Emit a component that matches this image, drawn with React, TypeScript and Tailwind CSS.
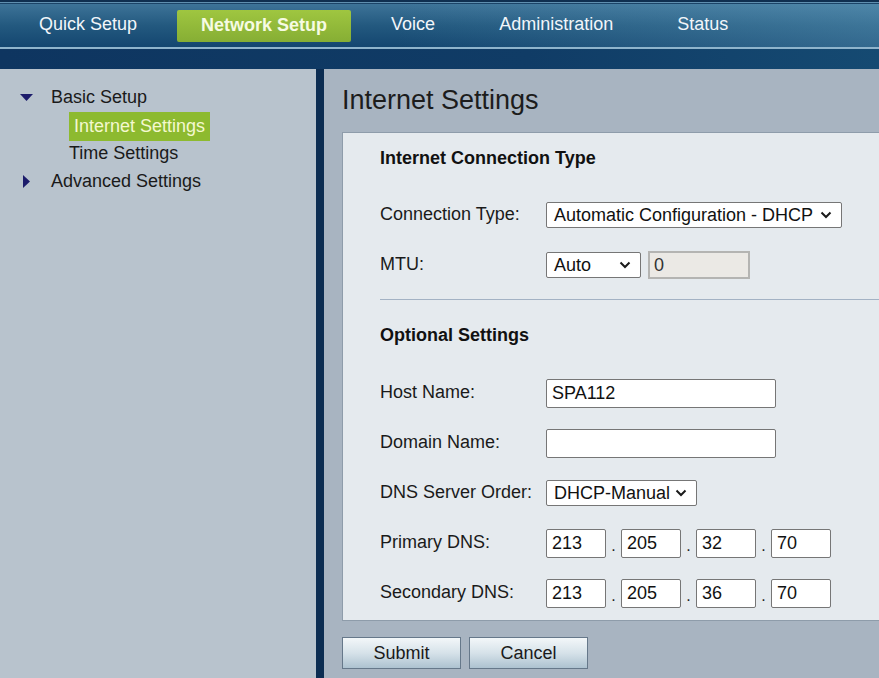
import * as React from "react";

const NAV = ["Quick Setup", "Network Setup", "Voice", "Administration", "Status"];

function Chevron() {
  return (
    <svg width="12" height="8" viewBox="0 0 12 8" className="pointer-events-none absolute right-[9px] top-1/2 -translate-y-1/2">
      <path d="M1.5 1.5 L6 6 L10.5 1.5" fill="none" stroke="#1a1a1a" strokeWidth="2" />
    </svg>
  );
}

function FakeSelect({ value, width }: { value: string; width: string }) {
  return (
    <div className={`relative flex h-[26px] items-center rounded-[2px] border border-[#767676] bg-white pl-[7px] text-[18px] leading-none text-[#111] ${width}`}>
      {value}
      <Chevron />
    </div>
  );
}

function TextBox({ value, width }: { value?: string; width: string }) {
  return (
    <div className={`flex h-[29px] items-center rounded-[2px] border border-[#767676] bg-white pl-[5px] text-[18px] leading-none text-[#111] ${width}`}>
      {value}
    </div>
  );
}

function Row({ label, children }: { label: string; children: React.ReactNode }) {
  return (
    <div className="flex h-[50px] items-center">
      <div className="w-[166px] shrink-0 -translate-y-px text-[18px] text-[#1a1a1a]">{label}</div>
      {children}
    </div>
  );
}

function IpRow({ label, parts }: { label: string; parts: string[] }) {
  return (
    <Row label={label}>
      <div className="flex items-center">
        {parts.map((p, i) => (
          <React.Fragment key={i}>
            {i > 0 ? <span className="w-[15px] pt-[6px] text-center text-[16px] text-[#222]">.</span> : null}
            <TextBox value={p} width="w-[60px]" />
          </React.Fragment>
        ))}
      </div>
    </Row>
  );
}

export default function App() {
  return (
    <div className="h-[678px] w-full overflow-hidden font-['Liberation_Sans',Arial,sans-serif]">
      {/* top bar */}
      <div className="h-[2px] bg-[#0f2f50]" />
      <div className="h-px bg-[#5f8fb0]" />
      <div className="h-px bg-[#1b4468]" />
      <div className="flex h-[43px] items-center gap-4 bg-[linear-gradient(90deg,rgba(110,170,200,0)_45%,rgba(110,170,200,0.35)_100%),linear-gradient(180deg,#3d7398_0%,#23597f_50%,#144670_100%)] pl-[15px]">
        {NAV.map((item) =>
          item === "Network Setup" ? (
            <div
              key={item}
              className="flex h-[32px] items-center rounded-[2px] bg-[linear-gradient(180deg,#9fc640,#86ae34)] px-6 text-[18px] font-bold text-[#f6fbe2]"
            >
              {item}
            </div>
          ) : (
            <div key={item} className="-translate-y-px px-6 text-[18px] text-[#f2f6fa]">
              {item}
            </div>
          )
        )}
      </div>
      <div className="h-[2px] bg-[#8fb4cc]" />
      <div className="h-[20px] bg-[linear-gradient(90deg,#0e3560,#103c66_60%,#154a72)]" />

      <div className="flex h-[609px]">
        {/* sidebar */}
        <div className="w-[316px] shrink-0 bg-[#b8c3cd] pt-[14px] text-[18px] text-[#1a1a1a]">
          <div className="flex h-7 items-center">
            <svg width="13" height="7" viewBox="0 0 13 7" className="ml-[20px] mr-[18px]">
              <path d="M0 0 H13 L6.5 7 Z" fill="#1c1c6b" />
            </svg>
            <span>Basic Setup</span>
          </div>
          <div className="flex h-7 items-center pl-[69px]">
            <span className="flex h-[29px] translate-y-px items-center bg-[#8dba2f] px-[5px] text-[#f4f8cf]">Internet Settings</span>
          </div>
          <div className="flex h-7 items-center pl-[69px]">Time Settings</div>
          <div className="flex h-7 items-center">
            <svg width="7" height="13" viewBox="0 0 7 13" className="ml-[23px] mr-[21px]">
              <path d="M0 0 L7 6.5 L0 13 Z" fill="#1c1c6b" />
            </svg>
            <span>Advanced Settings</span>
          </div>
        </div>
        <div className="w-[8px] shrink-0 bg-[#0c2d52]" />

        {/* content */}
        <div className="min-w-0 flex-1 bg-[#a8b4c1] pl-[18px] pt-[15px]">
          <h1 className="h-[32px] text-[27px] leading-[32px] text-[#1c1c1c]">Internet Settings</h1>
          <div className="mt-[16px] w-[600px] border border-[#8e9caa] bg-[#e5eaee] pb-[2px] pl-[37px]">
            <div className="flex h-[50px] items-center text-[18px] font-bold text-[#111]">Internet Connection Type</div>
            <div className="mt-[7px]">
              <Row label="Connection Type:">
                <FakeSelect value="Automatic Configuration - DHCP" width="w-[296px]" />
              </Row>
              <Row label="MTU:">
                <FakeSelect value="Auto" width="w-[95px]" />
                <div className="ml-[7px] flex h-[28px] w-[102px] items-center border-2 border-[#b4b4b2] bg-[#ebe9e5] pl-[4px] text-[18px] text-[#333]">
                  0
                </div>
              </Row>
            </div>
            <div className="mt-[9px] h-px bg-[#a3b2c4]" />
            <div className="mt-[10px] flex h-[50px] items-center text-[18px] font-bold text-[#111]">Optional Settings</div>
            <div className="mt-[8px]">
              <Row label="Host Name:">
                <TextBox value="SPA112" width="w-[230px]" />
              </Row>
              <Row label="Domain Name:">
                <TextBox width="w-[230px]" />
              </Row>
              <Row label="DNS Server Order:">
                <FakeSelect value="DHCP-Manual" width="w-[151px]" />
              </Row>
              <IpRow label="Primary DNS:" parts={["213", "205", "32", "70"]} />
              <IpRow label="Secondary DNS:" parts={["213", "205", "36", "70"]} />
            </div>
          </div>
          <div className="mt-[16px] flex gap-2">
            {["Submit", "Cancel"].map((b) => (
              <div
                key={b}
                className="flex h-[32px] w-[119px] items-center justify-center border border-[#66788a] bg-[linear-gradient(180deg,#f3f7f9_0%,#d6e2e9_50%,#adc2d0_100%)] text-[18px] text-[#1a1a1a]"
              >
                {b}
              </div>
            ))}
          </div>
        </div>
      </div>
    </div>
  );
}
